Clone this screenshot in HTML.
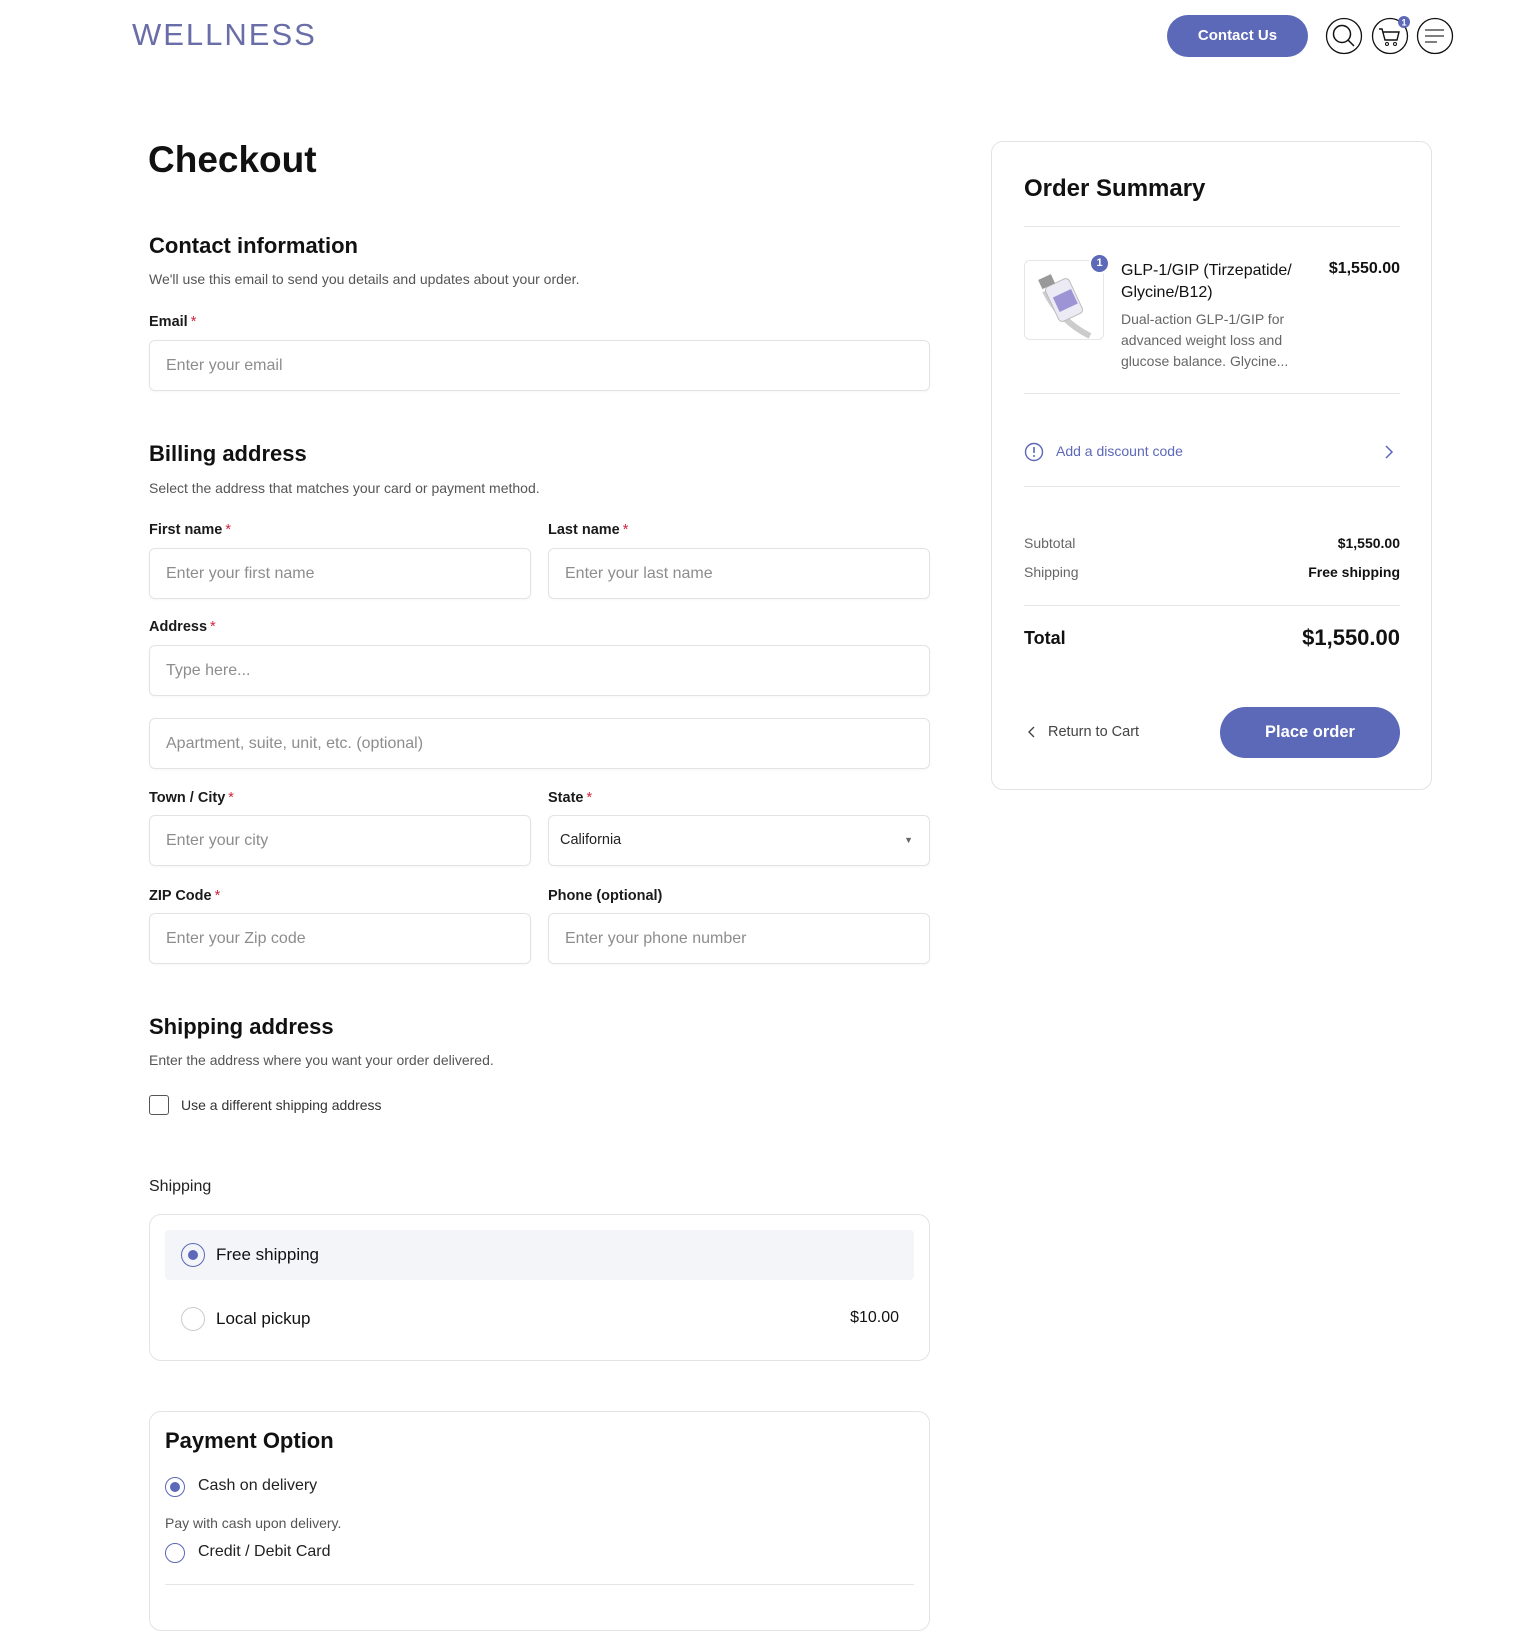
<!DOCTYPE html>
<html><head><meta charset="utf-8"><style>
*{box-sizing:border-box;margin:0;padding:0}
body{width:1530px;height:1594px;overflow:hidden;background:#fff;font-family:"Liberation Sans",Arial,sans-serif;color:#111;position:relative}
.a{position:absolute;white-space:nowrap}
.lbl{font-size:14.5px;font-weight:bold;color:#1a1a1a}
.lbl i{color:#d0243a;font-style:normal;font-weight:normal;margin-left:3px}
.inp{position:absolute;border:1px solid #e3e3e6;border-radius:6px;height:51px;font-size:16px;color:#8d8d8d;padding-left:16px;line-height:49px;box-shadow:0 1px 2px rgba(0,0,0,.04)}
.h2{font-size:22px;font-weight:bold;color:#111}
.sub{font-size:14px;color:#555}
.hr{position:absolute;height:1px;background:#e6e6e9}
</style></head><body>
<div class="a" style="left:132px;top:17px;font-size:31px;letter-spacing:2px;color:#6a6ea8;font-weight:300">WELLNESS</div>
<div class="a" style="left:1167px;top:15px;width:141px;height:42px;border-radius:21px;background:#5c68b8;color:#fff;font-weight:bold;font-size:15px;text-align:center;line-height:42px">Contact Us</div>
<svg class="a" style="left:1324px;top:16px" width="130" height="42" viewBox="0 0 130 42">
<circle cx="20" cy="20" r="17.5" fill="none" stroke="#111" stroke-width="1.3"/>
<circle cx="18" cy="18" r="8.5" fill="none" stroke="#111" stroke-width="1.5"/><line x1="24" y1="24" x2="30" y2="30" stroke="#111" stroke-width="1.5"/>
<circle cx="66" cy="20" r="17.5" fill="none" stroke="#111" stroke-width="1.3"/>
<path d="M55 13h3l3 11h12l2-8H59" fill="none" stroke="#111" stroke-width="1.4"/><circle cx="63" cy="28" r="1.5" fill="none" stroke="#111"/><circle cx="71" cy="28" r="1.5" fill="none" stroke="#111"/>
<circle cx="80" cy="6" r="6" fill="#5c68b8"/><text x="80" y="9.5" font-size="9" font-weight="bold" fill="#fff" text-anchor="middle" font-family="Liberation Sans">1</text>
<circle cx="111" cy="20" r="17.5" fill="none" stroke="#111" stroke-width="1.3"/>
<path d="M101 14h19M101 20h19M101 26h12" stroke="#555" stroke-width="1.4"/>
</svg>

<div class="a" style="left:148px;top:139px;font-size:37px;font-weight:bold">Checkout</div>
<div class="a h2" style="left:149px;top:233px">Contact information</div>
<div class="a sub" style="left:149px;top:271px">We'll use this email to send you details and updates about your order.</div>
<div class="a lbl" style="left:149px;top:314px">Email<i>*</i></div>
<div class="inp" style="left:149px;top:340px;width:781px">Enter your email</div>

<div class="a h2" style="left:149px;top:441px">Billing address</div>
<div class="a sub" style="left:149px;top:480px">Select the address that matches your card or payment method.</div>
<div class="a lbl" style="left:149px;top:522px">First name<i>*</i></div>
<div class="a lbl" style="left:548px;top:522px">Last name<i>*</i></div>
<div class="inp" style="left:149px;top:548px;width:382px">Enter your first name</div>
<div class="inp" style="left:548px;top:548px;width:382px">Enter your last name</div>
<div class="a lbl" style="left:149px;top:619px">Address<i>*</i></div>
<div class="inp" style="left:149px;top:645px;width:781px">Type here...</div>
<div class="inp" style="left:149px;top:718px;width:781px">Apartment, suite, unit, etc. (optional)</div>
<div class="a lbl" style="left:149px;top:790px">Town / City<i>*</i></div>
<div class="a lbl" style="left:548px;top:790px">State<i>*</i></div>
<div class="inp" style="left:149px;top:815px;width:382px">Enter your city</div>
<div class="inp" style="left:548px;top:815px;width:382px;color:#222;font-size:14.5px;padding-left:11px">California<span style="position:absolute;right:16px;top:0;font-size:9px;color:#666">▼</span></div>
<div class="a lbl" style="left:149px;top:888px">ZIP Code<i>*</i></div>
<div class="a lbl" style="left:548px;top:888px">Phone (optional)</div>
<div class="inp" style="left:149px;top:913px;width:382px">Enter your Zip code</div>
<div class="inp" style="left:548px;top:913px;width:382px">Enter your phone number</div>

<div class="a h2" style="left:149px;top:1014px">Shipping address</div>
<div class="a sub" style="left:149px;top:1052px">Enter the address where you want your order delivered.</div>
<div class="a" style="left:149px;top:1095px;width:20px;height:20px;border:1.5px solid #555;border-radius:3px"></div>
<div class="a sub" style="left:181px;top:1097px;color:#333">Use a different shipping address</div>

<div class="a" style="left:149px;top:1178px;font-size:16px;color:#222">Shipping</div>
<div class="a" style="left:149px;top:1214px;width:781px;height:147px;border:1px solid #e3e3e6;border-radius:12px"></div>
<div class="a" style="left:165px;top:1230px;width:749px;height:50px;background:#f4f5f9;border-radius:4px"></div>
<div class="a" style="left:181px;top:1243px;width:24px;height:24px;border:1.5px solid #5c68b8;border-radius:50%"><div style="margin:5.5px;width:10px;height:10px;border-radius:50%;background:#5c68b8"></div></div>
<div class="a" style="left:216px;top:1245px;font-size:17px;color:#111">Free shipping</div>
<div class="a" style="left:181px;top:1307px;width:24px;height:24px;border:1.5px solid #ccc;border-radius:50%"></div>
<div class="a" style="left:216px;top:1309px;font-size:17px;color:#111">Local pickup</div>
<div class="a" style="left:820px;top:1309px;width:79px;text-align:right;font-size:16px;color:#111">$10.00</div>

<div class="a" style="left:149px;top:1411px;width:781px;height:220px;border:1px solid #e3e3e6;border-radius:12px"></div>
<div class="a h2" style="left:165px;top:1428px">Payment Option</div>
<div class="a" style="left:165px;top:1477px;width:20px;height:20px;border:1.5px solid #5c68b8;border-radius:50%"><div style="margin:3.5px;width:10px;height:10px;border-radius:50%;background:#5c68b8"></div></div>
<div class="a" style="left:198px;top:1477px;font-size:16px;color:#222">Cash on delivery</div>
<div class="a sub" style="left:165px;top:1515px">Pay with cash upon delivery.</div>
<div class="a" style="left:165px;top:1543px;width:20px;height:20px;border:1.5px solid #5c68b8;border-radius:50%"></div>
<div class="a" style="left:198px;top:1543px;font-size:16px;color:#222">Credit / Debit Card</div>
<div class="hr" style="left:165px;top:1584px;width:749px"></div>

<div class="a" style="left:991px;top:141px;width:441px;height:649px;border:1px solid #e3e3e6;border-radius:12px"></div>
<div class="a" style="left:1024px;top:175px;font-size:24px;font-weight:bold">Order Summary</div>
<div class="hr" style="left:1024px;top:226px;width:376px"></div>
<div class="a" style="left:1024px;top:260px;width:80px;height:80px;border:1px solid #e6e6e6;border-radius:6px;overflow:hidden">
<svg width="80" height="80"><path d="M20 30c10 20 25 35 45 45" stroke="#ccc" stroke-width="6" fill="none"/><rect x="26" y="20" width="26" height="38" rx="4" transform="rotate(-25 39 39)" fill="#eceaf4" stroke="#bbb"/><rect x="30" y="32" width="20" height="16" transform="rotate(-25 39 39)" fill="#9d94d6"/><rect x="24" y="10" width="14" height="10" transform="rotate(-25 39 39)" fill="#999"/></svg></div>
<div class="a" style="left:1089px;top:253px;width:21px;height:21px;border-radius:50%;background:#5c68b8;border:2px solid #fff;color:#fff;font-size:11px;font-weight:bold;text-align:center;line-height:17px">1</div>
<div class="a" style="left:1121px;top:260px;font-size:16px;line-height:22px;color:#111">GLP-1/GIP (Tirzepatide/<br>Glycine/B12)</div>
<div class="a" style="left:1300px;top:260px;width:100px;text-align:right;font-size:16px;font-weight:bold">$1,550.00</div>
<div class="a" style="left:1121px;top:309px;font-size:14px;line-height:21px;color:#666">Dual-action GLP-1/GIP for<br>advanced weight loss and<br>glucose balance. Glycine...</div>
<div class="hr" style="left:1024px;top:393px;width:376px"></div>
<svg class="a" style="left:1024px;top:442px" width="20" height="20"><circle cx="10" cy="10" r="8.5" fill="none" stroke="#5c68b8" stroke-width="1.4"/><path d="M10 5v6" stroke="#5c68b8" stroke-width="1.6"/><circle cx="10" cy="14" r="1" fill="#5c68b8"/></svg>
<div class="a" style="left:1056px;top:443px;font-size:14px;color:#5c68b8">Add a discount code</div>
<svg class="a" style="left:1383px;top:444px" width="12" height="16"><path d="M3 2l6 6-6 6" fill="none" stroke="#5c68b8" stroke-width="1.5"/></svg>
<div class="hr" style="left:1024px;top:486px;width:376px"></div>
<div class="a" style="left:1024px;top:535px;font-size:14px;color:#666">Subtotal</div>
<div class="a" style="left:1280px;top:535px;width:120px;text-align:right;font-size:14px;font-weight:bold">$1,550.00</div>
<div class="a" style="left:1024px;top:564px;font-size:14px;color:#666">Shipping</div>
<div class="a" style="left:1260px;top:564px;width:140px;text-align:right;font-size:14px;font-weight:bold">Free shipping</div>
<div class="hr" style="left:1024px;top:605px;width:376px"></div>
<div class="a" style="left:1024px;top:628px;font-size:18px;font-weight:bold">Total</div>
<div class="a" style="left:1240px;top:625px;width:160px;text-align:right;font-size:22px;font-weight:bold">$1,550.00</div>
<svg class="a" style="left:1027px;top:726px" width="10" height="12"><path d="M7 1L2 6l5 5" fill="none" stroke="#444" stroke-width="1.4"/></svg>
<div class="a" style="left:1048px;top:724px;font-size:14.5px;color:#444">Return to Cart</div>
<div class="a" style="left:1220px;top:707px;width:180px;height:51px;border-radius:26px;background:#5c68b8;color:#fff;font-size:16.5px;font-weight:bold;text-align:center;line-height:51px">Place order</div>
</body></html>
